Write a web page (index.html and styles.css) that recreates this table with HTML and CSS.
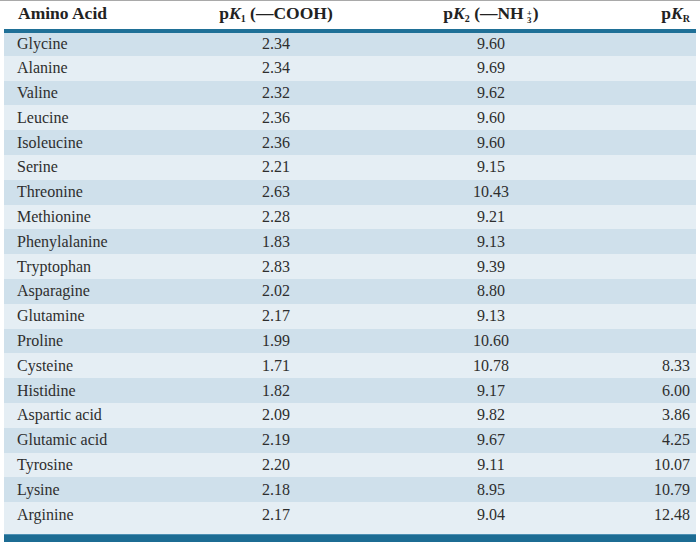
FILE: index.html
```html
<!DOCTYPE html>
<html>
<head>
<meta charset="utf-8">
<link rel="stylesheet" href="styles.css">
</head>
<body>
<div class="sheet">
<table class="pk">
  <colgroup>
    <col class="c-name"><col class="c-k1"><col class="c-k2"><col class="c-kr">
  </colgroup>
  <thead>
    <tr>
      <th class="name">Amino Acid</th>
      <th class="mid">p<i>K</i><sub>1</sub> (—COOH)</th>
      <th class="mid">p<i>K</i><sub>2</sub> (—NH<span class="stack"><span class="sp">+</span><span class="sb">3</span></span>)</th>
      <th class="right">p<i>K</i><sub>R</sub></th>
    </tr>
  </thead>
  <tbody>
    <tr><td class="name">Glycine</td><td class="mid">2.34</td><td class="mid">9.60</td><td class="right"></td></tr>
    <tr><td class="name">Alanine</td><td class="mid">2.34</td><td class="mid">9.69</td><td class="right"></td></tr>
    <tr><td class="name">Valine</td><td class="mid">2.32</td><td class="mid">9.62</td><td class="right"></td></tr>
    <tr><td class="name">Leucine</td><td class="mid">2.36</td><td class="mid">9.60</td><td class="right"></td></tr>
    <tr><td class="name">Isoleucine</td><td class="mid">2.36</td><td class="mid">9.60</td><td class="right"></td></tr>
    <tr><td class="name">Serine</td><td class="mid">2.21</td><td class="mid">9.15</td><td class="right"></td></tr>
    <tr><td class="name">Threonine</td><td class="mid">2.63</td><td class="mid">10.43</td><td class="right"></td></tr>
    <tr><td class="name">Methionine</td><td class="mid">2.28</td><td class="mid">9.21</td><td class="right"></td></tr>
    <tr><td class="name">Phenylalanine</td><td class="mid">1.83</td><td class="mid">9.13</td><td class="right"></td></tr>
    <tr><td class="name">Tryptophan</td><td class="mid">2.83</td><td class="mid">9.39</td><td class="right"></td></tr>
    <tr><td class="name">Asparagine</td><td class="mid">2.02</td><td class="mid">8.80</td><td class="right"></td></tr>
    <tr><td class="name">Glutamine</td><td class="mid">2.17</td><td class="mid">9.13</td><td class="right"></td></tr>
    <tr><td class="name">Proline</td><td class="mid">1.99</td><td class="mid">10.60</td><td class="right"></td></tr>
    <tr><td class="name">Cysteine</td><td class="mid">1.71</td><td class="mid">10.78</td><td class="right">8.33</td></tr>
    <tr><td class="name">Histidine</td><td class="mid">1.82</td><td class="mid">9.17</td><td class="right">6.00</td></tr>
    <tr><td class="name">Aspartic acid</td><td class="mid">2.09</td><td class="mid">9.82</td><td class="right">3.86</td></tr>
    <tr><td class="name">Glutamic acid</td><td class="mid">2.19</td><td class="mid">9.67</td><td class="right">4.25</td></tr>
    <tr><td class="name">Tyrosine</td><td class="mid">2.20</td><td class="mid">9.11</td><td class="right">10.07</td></tr>
    <tr><td class="name">Lysine</td><td class="mid">2.18</td><td class="mid">8.95</td><td class="right">10.79</td></tr>
    <tr><td class="name">Arginine</td><td class="mid">2.17</td><td class="mid">9.04</td><td class="right">12.48</td></tr>
  </tbody>
</table>
<div class="tail"></div>
<div class="bar"></div>
</div>
</body>
</html>
```
FILE: styles.css
```css
html, body {
  margin: 0;
  padding: 0;
  background: #ffffff;
}
body {
  border-top: 1px solid #a9a9a9;
  font-family: "Liberation Serif", "Times New Roman", serif;
  color: #2e2e2e;
}
.sheet {
  padding: 0 4px;
}
.pk {
  width: 692px;
  border-collapse: collapse;
  table-layout: fixed;
  font-size: 16px;
}
.c-name { width: 200px; }
.c-k1 { width: 144px; }
.c-k2 { width: 286px; }
.c-kr { width: 62px; }

.pk thead tr {
  height: 30px;
  border-bottom: 4px solid #1f7097;
}
.pk th {
  font-size: 17.5px;
  font-weight: bold;
  color: #222;
  padding: 0 0 4px 0;
  line-height: 20px;
  vertical-align: middle;
  white-space: nowrap;
}
.pk th i { font-style: italic; }
.pk sub {
  font-size: 10px;
  vertical-align: -3px;
  line-height: 0;
}
.stack {
  display: inline-block;
  font-size: 9px;
  line-height: 7px;
  vertical-align: -4px;
  margin: 0 1px 0 3px;
  text-align: center;
}
.sp, .sb {
  display: block;
}
.pk tbody tr {
  height: 24.8px;
}
.pk tbody tr:nth-child(odd) { background: #cfe0eb; }
.pk tbody tr:nth-child(even) { background: #e5eef4; }
.pk td {
  padding: 0;
  vertical-align: middle;
  line-height: 18px;
}
.name { text-align: left; padding-left: 13px !important; }
th.name { padding-left: 14px !important; }
.mid { text-align: center; }
.right { text-align: right; padding-right: 6px !important; }

.tail {
  height: 7px;
  background: #e5eef4;
}
.bar {
  height: 7px;
  background: #1c6c93;
  border-top: 1px solid #4d90b3;
}
```
